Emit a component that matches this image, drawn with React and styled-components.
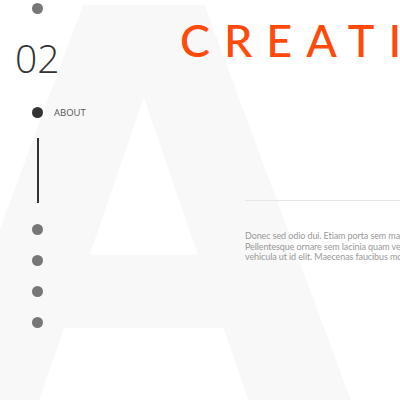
import React from 'react'
import styled, { createGlobalStyle } from 'styled-components'

const GlobalStyle = createGlobalStyle`
  html, body {
    margin: 0;
    padding: 0;
    background: #fff;
  }
  * {
    box-sizing: border-box;
  }
`

const navItems = ['about', 'services', 'work', 'team', 'contact']

const App = () => {
  return (
    <Page>
      <GlobalStyle />
      <BigLetter aria-hidden='true'>A</BigLetter>
      <Layout>
        <SideNav>
          <Dot />
          <SlideNumber>02</SlideNumber>
          <NavRow>
            <Dot $active />
            <NavLabel>about</NavLabel>
          </NavRow>
          <Progress />
          <DotList>
            {navItems.slice(1).map((item) => (
              <Dot key={item} title={item} />
            ))}
          </DotList>
        </SideNav>
        <Content>
          <Title>CREATIVE</Title>
          <Rule />
          <Text>
            <span>Donec sed odio dui. Etiam porta sem malesuada magna mollis euismod.</span>
            <span>Pellentesque ornare sem lacinia quam venenatis vestibulum. Nullam id dolor id nibh ultricies</span>
            <span>vehicula ut id elit. Maecenas faucibus mollis interdum.</span>
          </Text>
        </Content>
      </Layout>
    </Page>
  )
}

const Page = styled.main`
  position: relative;
  width: 400px;
  height: 400px;
  overflow: hidden;
  background: #fff;
`

const BigLetter = styled.div`
  position: absolute;
  top: -58px;
  left: -66px;
  font-family: 'DejaVu Sans', sans-serif;
  font-weight: 700;
  font-size: 542px;
  line-height: 1;
  color: #f8f8f8;
  user-select: none;
`

const Layout = styled.div`
  position: relative;
  z-index: 1;
  display: flex;
  height: 100%;
`

const SideNav = styled.nav`
  width: 100px;
  flex-shrink: 0;
  display: flex;
  flex-direction: column;
  align-items: flex-start;
  padding: 3px 0 0 32px;
`

const Dot = styled.span`
  display: block;
  width: 11px;
  height: 11px;
  border-radius: 50%;
  flex-shrink: 0;
  background: ${(p) => (p.$active ? '#333' : '#777')};
`

const SlideNumber = styled.div`
  margin: 24px 0 0 -17px;
  font-family: 'Open Sans', sans-serif;
  font-weight: 300;
  font-size: 39px;
  line-height: 1;
  color: #333;
`

const NavRow = styled.div`
  display: flex;
  align-items: center;
  gap: 11px;
  margin-top: 30px;
`

const NavLabel = styled.span`
  font-family: 'Open Sans', sans-serif;
  font-size: 9.5px;
  text-transform: uppercase;
  color: #555;
  line-height: 1;
`

const Progress = styled.span`
  display: block;
  width: 2px;
  height: 65px;
  margin: 20px 0 0 4.5px;
  background: #333;
`

const DotList = styled.div`
  display: flex;
  flex-direction: column;
  gap: 20px;
  margin-top: 21px;
`

const Content = styled.section`
  flex: 1;
  display: flex;
  flex-direction: column;
  padding-top: 18px;
`

const Title = styled.h1`
  margin: 0 0 0 80px;
  font-family: 'Lato', sans-serif;
  font-weight: 500;
  font-size: 45px;
  line-height: 1;
  letter-spacing: 14px;
  color: #ff4a0a;
  white-space: nowrap;
`

const Rule = styled.hr`
  margin: 137px 0 0 145px;
  border: 0;
  height: 1px;
  background: #e6e6e6;
`

const Text = styled.p`
  margin: 30px 0 0 145px;
  font-family: 'Lato', sans-serif;
  font-size: 9px;
  line-height: 10.5px;
  letter-spacing: -0.1px;
  color: #999;
  white-space: nowrap;
  span {
    display: block;
  }
`

export default App
